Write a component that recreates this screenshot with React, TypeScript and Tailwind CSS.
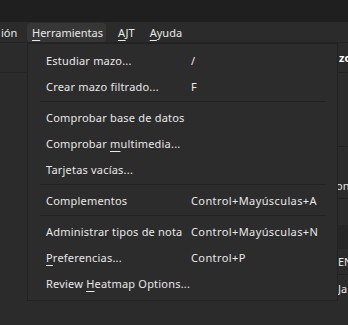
import React from 'react';

type Item = { label: React.ReactNode; shortcut?: string } | 'sep';

const U = ({ children }: { children: React.ReactNode }) => (
  <span className="underline decoration-1 underline-offset-[3px]">{children}</span>
);

const items: Item[] = [
  { label: 'Estudiar mazo...', shortcut: '/' },
  { label: 'Crear mazo filtrado...', shortcut: 'F' },
  'sep',
  { label: 'Comprobar base de datos' },
  { label: <>Comprobar <U>m</U>ultimedia...</> },
  { label: 'Tarjetas vacías...' },
  'sep',
  { label: 'Complementos', shortcut: 'Control+Mayúsculas+A' },
  'sep',
  { label: 'Administrar tipos de nota', shortcut: 'Control+Mayúsculas+N' },
  { label: <><U>P</U>referencias...</>, shortcut: 'Control+P' },
  { label: <>Review <U>H</U>eatmap Options...</> }
];

function Dropdown() {
  return (
    <div className="absolute left-[27px] top-[43px] w-[311px] border border-[#222222] bg-[#2c2c2c] pt-[3px] pb-[4px] tracking-[0.2px]">
      {items.map((it, i) =>
        it === 'sep' ? (
          <div key={i} className="flex h-[5px] items-center px-[12px]">
            <div className="h-px w-full bg-[#222222]" />
          </div>
        ) : (
          <div key={i} className="flex h-[26px] items-center">
            <span className="w-[163px] shrink-0 pl-[18px] whitespace-nowrap">{it.label}</span>
            <span className="whitespace-nowrap tracking-[0.4px]">{it.shortcut}</span>
          </div>
        )
      )}
    </div>
  );
}

export default function App() {
  return (
    <div
      className="relative h-[325px] w-[348px] overflow-hidden bg-[#2b2b2b] text-[11px] leading-none text-[#e8e8e8]"
      style={{ fontFamily: '"Noto Sans", sans-serif' }}
    >
      <div className="h-[22px] bg-[#1f1f1f]" />
      <div className="flex h-[21px] items-center border-b border-[#242424]">
        <span className="w-[27px] pl-[1px]">ión</span>
        <span className="flex h-[19px] w-[79px] items-center rounded-[4px] bg-[#363636] pl-[5px]">
          <U>H</U>erramientas
        </span>
        <span className="ml-[12px]">
          <U>A</U>JT
        </span>
        <span className="ml-[15px]">
          <U>A</U>yuda
        </span>
      </div>
      <div className="flex">
        <div className="flex-1">
          <div className="h-[30px] border-b border-[#232323]" />
        </div>
        <div className="w-[11px] border-l border-[#232323]">
          <div className="flex h-[30px] items-center border-b border-[#232323] pl-[1px] font-bold text-white">zo</div>
          <div className="h-[74px] border-b border-[#232323]" />
          <div className="-ml-[2px] flex h-[52px] items-end border-b border-[#232323] pb-[7px]">on</div>
          <div className="h-[26px]" />
          <div className="h-[24px] bg-[#262626]" />
          <div className="flex h-[26px] items-center border-b border-[#232323]">EN</div>
          <div className="flex h-[26px] items-center">Ja</div>
        </div>
      </div>
      <Dropdown />
    </div>
  );
}
